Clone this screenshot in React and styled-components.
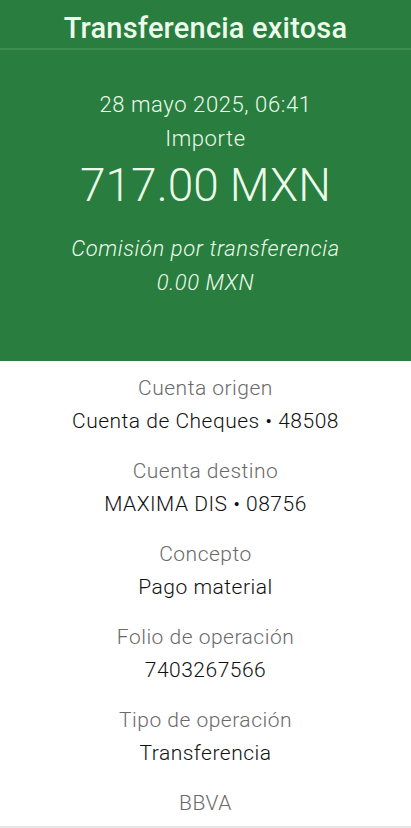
import React from 'react'
import styled, { createGlobalStyle } from 'styled-components'

const GlobalStyle = createGlobalStyle`
  html, body {
    margin: 0;
    padding: 0;
    background: #ffffff;
  }
  body {
    font-family: Roboto, "Noto Sans", sans-serif;
  }
`

const details = [
  { label: 'Cuenta origen', value: 'Cuenta de Cheques • 48508' },
  { label: 'Cuenta destino', value: 'MAXIMA DIS • 08756' },
  { label: 'Concepto', value: 'Pago material' },
  { label: 'Folio de operación', value: '7403267566' },
  { label: 'Tipo de operación', value: 'Transferencia' },
]

export default function App() {
  return (
    <>
      <GlobalStyle />
      <Screen>
        <Header>
          <Title>Transferencia exitosa</Title>
          <Summary>
            <DateLine>28 mayo 2025, 06:41</DateLine>
            <DateLine>Importe</DateLine>
            <Amount>717.00 MXN</Amount>
            <Fee>
              Comisión por transferencia
              <br />
              0.00 MXN
            </Fee>
          </Summary>
        </Header>
        <Details>
          {details.map((d) => (
            <Field key={d.label}>
              <Label>{d.label}</Label>
              <Value>{d.value}</Value>
            </Field>
          ))}
          <Label>BBVA</Label>
        </Details>
      </Screen>
    </>
  )
}

const Screen = styled.div`
  width: 411px;
  min-height: 828px;
  display: flex;
  flex-direction: column;
  background: #fff;
  border-bottom: 2px solid #e4e4e4;
  box-sizing: border-box;
`

const Header = styled.header`
  background: #287d3f;
  color: #ecfbea;
  height: 361px;
  display: flex;
  flex-direction: column;
`

const Title = styled.h1`
  margin: 0;
  height: 50px;
  border-bottom: 2px solid #3d8c51;
  display: flex;
  align-items: center;
  justify-content: center;
  font-size: 29px;
  font-weight: 500;
  letter-spacing: 0.2px;
  padding-top: 7px;
  box-sizing: border-box;
`

const Summary = styled.div`
  display: flex;
  flex-direction: column;
  align-items: center;
  padding-top: 38px;
`

const DateLine = styled.div`
  font-size: 22px;
  font-weight: 300;
  letter-spacing: 0.6px;
  line-height: 34px;
`

const Amount = styled.div`
  font-size: 46px;
  font-weight: 300;
  line-height: 56px;
  margin-top: 1px;
  margin-bottom: 19px;
`

const Fee = styled.div`
  font-size: 22px;
  font-weight: 300;
  font-style: italic;
  letter-spacing: 0.6px;
  line-height: 34px;
  text-align: center;
`

const Details = styled.div`
  display: flex;
  flex-direction: column;
  align-items: center;
  padding-top: 10px;
  gap: 16px;
`

const Field = styled.div`
  display: flex;
  flex-direction: column;
  align-items: center;
`

const Label = styled.div`
  font-size: 21px;
  font-weight: 300;
  letter-spacing: 0.5px;
  color: #6a6a6a;
  line-height: 34px;
`

const Value = styled.div`
  font-size: 21px;
  font-weight: 300;
  letter-spacing: 0.5px;
  color: #111;
  line-height: 33px;
`
